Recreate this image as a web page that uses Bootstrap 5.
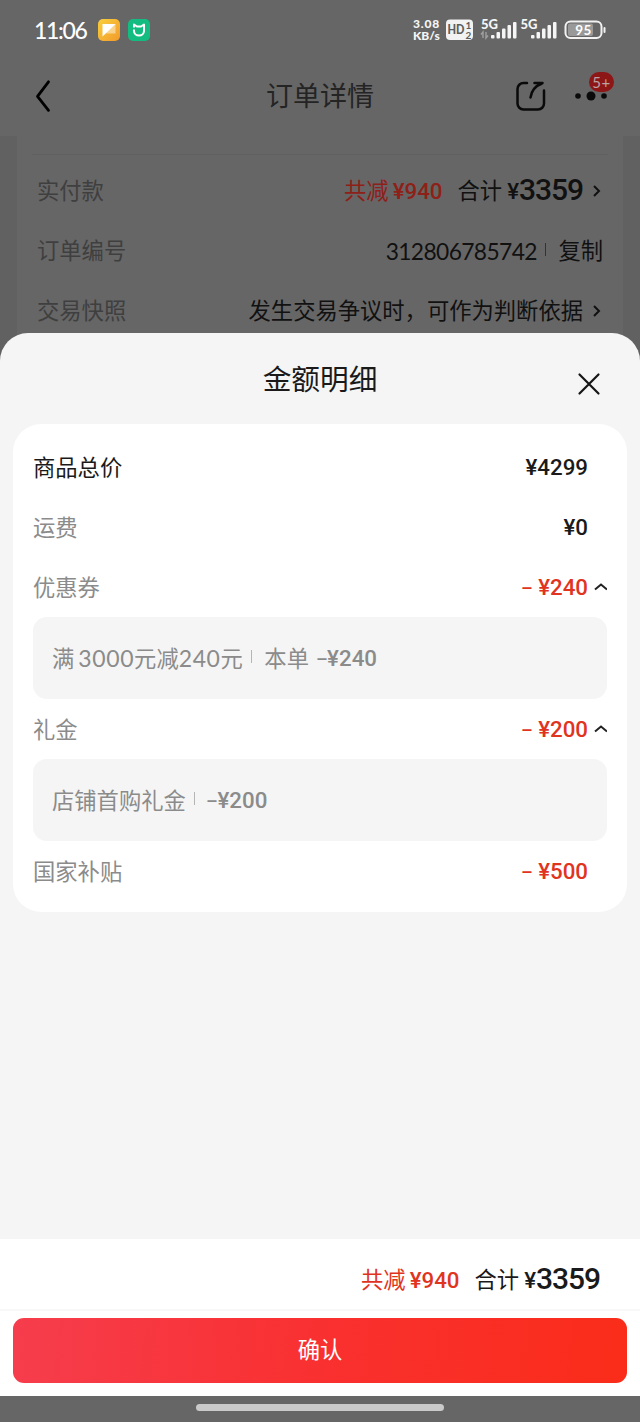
<!DOCTYPE html>
<html lang="zh-CN">
<head>
<meta charset="utf-8">
<meta name="viewport" content="width=device-width, initial-scale=1">
<title>订单详情</title>
<link rel="stylesheet" href="https://cdn.jsdelivr.net/npm/bootstrap@5.3.0/dist/css/bootstrap.min.css">
<style>
  body { font-family: "Noto Sans CJK SC", sans-serif; font-size: 22.3px; line-height: 30px; background: #666; color: #1a1a1a; }
  svg { display: block; flex: none; }
  .app { height: 1422px; overflow: hidden; }
  .latin { font-family: Lato, "Noto Sans CJK SC", sans-serif; }
  .zh { padding-bottom: 3px; }
  .orow .zh { padding-bottom: 5px; }
  .price { font-family: Roboto, sans-serif; font-weight: 500; font-size: 22.3px; }
  .minus { font-weight: 400; display: inline-block; transform: scaleX(1.7); transform-origin: right center; }
  .total-num { font-family: Roboto, sans-serif; font-weight: 500; font-size: 30px; letter-spacing: -1.05px; padding-bottom: 2px; }
  .sum-label { margin-left: 15px; margin-right: 1px; }

  .status { height: 60px; padding: 0 34px 0 34px; color: #fff; }
  .clock { font-size: 23px; font-weight: 500; width: 64px; letter-spacing: -1.3px; }
  .speed { font: 900 12px/12px Lato, sans-serif; width: 33px; white-space: nowrap; color: #f5f5f5; }
  .speed .fig { letter-spacing: .8px; }

  .titlebar { height: 76px; padding: 0 27px 4px 34px; }
  .titlebar h1 { font-size: 27px; line-height: 36px; font-weight: 400; color: #242424; padding-bottom: 3px; }
  .count { left: 18px; top: -19px; width: 25px; height: 20px; border-radius: 10px; background: #8d1616; color: #b9a3a3; font: 400 15px/20px Lato, sans-serif; letter-spacing: .5px; }

  .behind { height: 226px; padding: 0 17px; background: #616161; margin-bottom: -29px; }
  .behind-inner { height: 226px; background: #666; padding: 18px 20px 0 20px; }
  .hair { height: 1px; background: #606060; margin: 0 -5px 6px -5px; }
  .orow { height: 60px; color: #111; }
  .orow .name { color: #3f3f3f; }
  .saved { color: #8e2018; }
  .orderno { font-size: 22.8px; letter-spacing: -.62px; padding-bottom: 1px; }
  .vbar { width: 1.5px; height: 13px; background: currentColor; opacity: .6; }

  .sheet { background: #f5f5f5; border-radius: 28px 28px 0 0; height: 906px; padding: 0 13px; }
  .sheet h2 { font-size: 28.7px; line-height: 40px; font-weight: 400; padding-top: 25px; }
  .sheet-head { height: 91px; }
  .close-x { right: 39px; top: 39px; }
  .panel { background: #fff; border-radius: 28px; height: 488px; padding: 13px 20px 0 20px; }
  .line { height: 60px; }
  .muted { color: #8b8b8b; }
  .red { color: #e1341e; }
  .chev { width: 19px; }
  .detail { height: 82px; border-radius: 14px; background: #f5f5f5; color: #8b8b8b; padding: 0 19px; }
  .wide { font-size: 23px; letter-spacing: .6px; }

  .summary { height: 72px; background: #fff; padding: 11px 40px 0 0; border-bottom: 2px solid #f8f8f8; }
  .action { height: 85px; background: #fff; padding: 7px 13px 0; }
  .confirm { height: 65px; border: 0; border-radius: 11px; color: #fff; font-size: 22.3px; padding: 0 0 3px; background: linear-gradient(97deg, #f63d4d 0%, #f93030 50%, #fa2c19 100%); }
  .navzone { height: 26px; }
  .pill { width: 248px; height: 7px; border-radius: 4px; background: #cacaca; margin-bottom: 4px; }
</style>
</head>
<body>
<div class="app d-flex flex-column">

  <header class="status d-flex align-items-center">
    <div class="clock latin">11:06</div>
    <svg width="22" height="22" viewBox="0 0 22 22">
      <defs><linearGradient id="gy" x1="0" y1="0" x2="1" y2="1"><stop offset="0" stop-color="#f8cf3c"/><stop offset="1" stop-color="#f39a2b"/></linearGradient></defs>
      <rect width="22" height="22" rx="5" fill="url(#gy)"/>
      <path d="M4.500 5h13v9.500h-9z" fill="#fff" opacity=".45"/><path d="M4.500 5h13L4.500 17.500z" fill="#fff"/>
    </svg>
    <svg class="ms-2" width="22" height="22" viewBox="0 0 22 22">
      <rect width="22" height="22" rx="5" fill="#13bd81"/>
      <path d="M6 8.500V5.500l3 2h4l3-2v6.500a5 4.500 0 0 1-10 0v-1.500" fill="none" stroke="#fff" stroke-width="2" stroke-linejoin="round"/>
    </svg>
    <div class="speed ms-auto"><span class="fig">3.08</span><br>KB/s</div>
    <svg width="160" height="26" viewBox="446 17 160 26" font-family="Lato, sans-serif" font-weight="700" overflow="visible">
      <rect x="446" y="19.500" width="27" height="20.500" rx="4" fill="#f2f2f2"/>
      <g fill="#5c5c5c"><text x="447.500" y="34" font-size="12.500" font-weight="900" textLength="17" lengthAdjust="spacingAndGlyphs">HD</text><text x="465.500" y="29" font-size="10">1</text><text x="465.500" y="38.500" font-size="10">2</text></g>
      <g fill="#f5f5f5">
        <text x="481" y="29" font-size="13" font-weight="900">5G</text>
        <text x="520.500" y="29" font-size="13" font-weight="900">5G</text>
        <g id="bars"><rect x="491" y="35" width="3.500" height="3.500" rx="1"/><rect x="496.500" y="32" width="3.500" height="6.500" rx="1"/><rect x="502" y="28.500" width="3.500" height="10" rx="1"/><rect x="507.500" y="25" width="3.500" height="13.500" rx="1"/><rect x="513" y="22" width="3.500" height="16.500" rx="1"/></g>
        <use href="#bars" x="40"/>
      </g>
      <path d="M483 38v-6l-2 2.500M486 32v6l2-2.500" fill="none" stroke="#a0a0a0" stroke-width="1.400"/>
      <rect x="568" y="23.500" width="25" height="12.500" rx="2" fill="#999"/>
      <rect x="565.500" y="21.500" width="36" height="16.500" rx="5" fill="none" stroke="#f2f2f2" stroke-width="2"/>
      <rect x="603.500" y="27" width="2" height="6" rx="1" fill="#f2f2f2"/>
      <text x="583.500" y="34.500" font-size="13.500" text-anchor="middle" fill="#fff" letter-spacing=".3">95</text>
    </svg>
  </header>

  <nav class="titlebar position-relative d-flex align-items-center">
    <svg width="18" height="34" viewBox="0 0 18 34"><path d="M14.500 2.500 3.500 17l11 14" transform="translate(0 .3)" fill="none" stroke="#000" stroke-width="2.800" stroke-linecap="round" stroke-linejoin="round"/></svg>
    <h1 class="position-absolute start-0 end-0 text-center mb-0">订单详情</h1>
    <svg class="ms-auto" width="32" height="32" viewBox="1 0 32 32" overflow="visible"><path d="M13 3H9.500a6 6 0 0 0-6 6v14.500a6 6 0 0 0 6 6H24a6 6 0 0 0 6-6V10.500M20.500 3h8M28 3.500C21 6 17.500 11 16.500 17.500" fill="none" stroke="#0a0a0a" stroke-width="2.500" stroke-linecap="round" stroke-linejoin="round"/></svg>
    <div class="position-relative ps-1 ms-4">
      <svg width="38" height="10" viewBox="0 0 38 10" fill="#0a0a0a" overflow="visible"><circle cx="3" cy="5" r="2.800"/><circle cx="16" cy="5" r="4.500"/><circle cx="29" cy="5" r="2.800"/></svg>
      <span class="count position-absolute text-center">5+</span>
    </div>
  </nav>

  <section class="behind">
    <div class="behind-inner">
      <div class="hair"></div>
      <div class="orow d-flex align-items-center">
        <span class="name zh">实付款</span>
        <span class="zh saved ms-auto">共减</span><span class="price saved ms-1">¥940</span>
        <span class="zh sum-label">合计</span><span class="price ms-1">¥</span><span class="total-num">3359</span>
        <svg class="ms-2" width="12" height="16" viewBox="0 0 12 16"><path d="M3 3l5 5-5 5" fill="none" stroke="#111" stroke-width="2"/></svg>
      </div>
      <div class="orow d-flex align-items-center">
        <span class="name zh">订单编号</span>
        <span class="latin orderno ms-auto">312806785742</span><span class="vbar ms-2 me-2 mb-1"></span><span class="zh ps-1">复制</span>
      </div>
      <div class="orow d-flex align-items-center">
        <span class="name zh">交易快照</span>
        <span class="zh ms-auto">发生交易争议时，可作为判断依据</span>
        <svg class="ms-2" width="12" height="16" viewBox="0 0 12 16"><path d="M3 3l5 5-5 5" fill="none" stroke="#111" stroke-width="2"/></svg>
      </div>
    </div>
  </section>

  <main class="sheet position-relative">
    <div class="sheet-head text-center">
      <h2 class="mb-0">金额明细</h2>
      <svg class="close-x position-absolute" width="24" height="24" viewBox="0 0 24 24"><path d="M2.500 2.500l19 19M21.500 2.500l-19 19" fill="none" stroke="#151515" stroke-width="2.200" stroke-linecap="round"/></svg>
    </div>
    <div class="panel">
      <div class="line d-flex align-items-center"><span class="zh">商品总价</span><span class="price ms-auto">¥4299</span><span class="chev"></span></div>
      <div class="line d-flex align-items-center"><span class="zh muted">运费</span><span class="price ms-auto">¥0</span><span class="chev"></span></div>
      <div class="line d-flex align-items-center"><span class="zh muted">优惠券</span><span class="price red ms-auto"><span class="minus">-</span> ¥240</span><svg class="chev" height="12" viewBox="0 0 19 12"><path d="M7 8.500l6-5 6 5" fill="none" stroke="#222" stroke-width="2"/></svg></div>
      <div class="detail d-flex align-items-center"><span class="zh">满</span><span class="latin wide ps-1">3000</span><span class="zh">元减</span><span class="latin wide">240</span><span class="zh">元</span><span class="vbar ms-2 me-2 mb-1"></span><span class="zh ps-1">本单</span><span class="price ps-2 ms-1"><span class="minus">-</span>¥240</span></div>
      <div class="line d-flex align-items-center"><span class="zh muted">礼金</span><span class="price red ms-auto"><span class="minus">-</span> ¥200</span><svg class="chev" height="12" viewBox="0 0 19 12"><path d="M7 8.500l6-5 6 5" fill="none" stroke="#222" stroke-width="2"/></svg></div>
      <div class="detail d-flex align-items-center"><span class="zh">店铺首购礼金</span><span class="vbar mx-2 mb-1"></span><span class="price ps-1 ms-1"><span class="minus">-</span>¥200</span></div>
      <div class="line d-flex align-items-center"><span class="zh muted">国家补贴</span><span class="price red ms-auto"><span class="minus">-</span> ¥500</span><span class="chev"></span></div>
    </div>
  </main>

  <div class="summary d-flex align-items-center justify-content-end">
    <span class="zh red">共减</span><span class="price red ms-1">¥940</span>
    <span class="zh sum-label">合计</span><span class="price ms-1">¥</span><span class="total-num">3359</span>
  </div>
  <div class="action"><button class="confirm btn w-100">确认</button></div>
  <div class="navzone d-flex align-items-center justify-content-center"><div class="pill"></div></div>
</div>
<script src="https://cdn.jsdelivr.net/npm/bootstrap@5.3.0/dist/js/bootstrap.bundle.min.js"></script>
</body>
</html>
